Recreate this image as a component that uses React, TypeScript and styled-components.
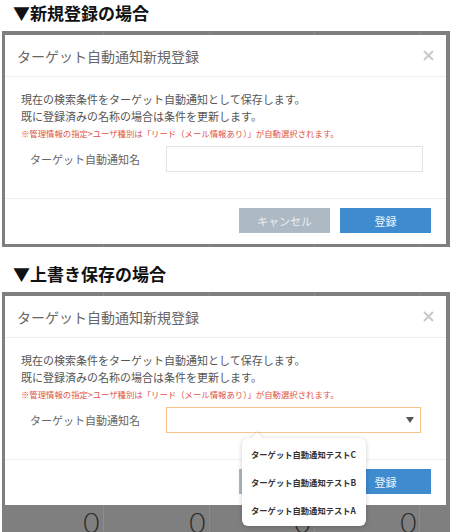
import React from 'react'
import styled, { createGlobalStyle } from 'styled-components'

const GlobalStyle = createGlobalStyle`
    html, body {
        margin: 0;
        padding: 0;
        overflow: hidden;
        background: #fff;
    }
    body {
        font-family: "Noto Sans CJK JP", "Noto Sans", sans-serif;
    }
`

const Page = styled.div`
    width: 450px;
    height: 532px;
    overflow: hidden;
    display: flex;
    flex-direction: column;
    gap: 14px;
`

const Section = styled.section`
    display: flex;
    flex-direction: column;
    gap: 5px;
`

const Heading = styled.h2`
    margin: 0;
    padding-left: 13px;
    font-size: 17px;
    line-height: 26px;
    font-weight: 700;
    color: #111;
`

const Backdrop = styled.div`
    margin-left: 2px;
    width: 448px;
    box-sizing: border-box;
    padding: 4px 4px 3px 3px;
    background-color: #7f7f7f;
    background-image: repeating-linear-gradient(90deg, transparent 0 104.3px, #8c8c8c 104.3px 105.3px);
    background-position: -3px 0;
`

const Modal = styled.div`
    background: #fff;
    display: flex;
    flex-direction: column;
`

const ModalHeader = styled.div`
    height: 41px;
    border-bottom: 1px solid #eee;
    display: flex;
    align-items: center;
    justify-content: space-between;
    padding: 0 12px 0 12px;
`

const ModalTitle = styled.h3`
    margin: 0;
    font-size: 14px;
    font-weight: 400;
    color: #666;
`

const CloseButton = styled.button`
    border: 0;
    background: none;
    padding: 0;
    width: 11px;
    height: 11px;
    display: flex;
    cursor: pointer;
`

const ModalBody = styled.div`
    padding: 14px 23px 26px 16px;
`

const Message = styled.p`
    margin: 0;
    font-size: 11px;
    line-height: 17px;
    color: #555;
`

const Notice = styled.p`
    margin: 0;
    font-size: 8.4px;
    line-height: 17px;
    color: #e0534a;
    white-space: nowrap;
`

const FieldRow = styled.div`
    margin-top: 4px;
    display: flex;
    align-items: center;
    padding-left: 9px;
`

const FieldLabel = styled.label`
    width: 136px;
    font-size: 11px;
    color: #666;
`

const TextInput = styled.input`
    width: 257px;
    height: 26px;
    box-sizing: border-box;
    border: 1px solid #e3e3e3;
    border-radius: 0;
    outline: none;
    padding: 0 8px;
    font-family: inherit;
`

const SelectBox = styled.div`
    position: relative;
    width: 255px;
    height: 26px;
    box-sizing: border-box;
    border: 1px solid #f9c48a;
    display: flex;
    align-items: center;
    justify-content: flex-end;
    padding-right: 6px;
`

const Dropdown = styled.ul`
    position: absolute;
    left: 75px;
    top: calc(100% + 6px);
    width: 124px;
    margin: 0;
    padding: 2px 0;
    list-style: none;
    background: #fff;
    border-radius: 6px;
    box-shadow: 0 1px 5px rgba(0, 0, 0, 0.2);
    z-index: 2;

    &::before {
        content: '';
        position: absolute;
        top: -4px;
        left: 11px;
        width: 8.5px;
        height: 8.5px;
        background: #fff;
        transform: rotate(45deg);
        box-shadow: -1px -1px 2px rgba(0, 0, 0, 0.1);
    }
`

const DropdownItem = styled.li`
    position: relative;
    height: 28px;
    line-height: 28px;
    padding-left: 9px;
    font-size: 8.3px;
    font-weight: 700;
    color: #333;
    white-space: nowrap;
`

const ModalFooter = styled.div`
    border-top: 1px solid #eee;
    padding: 9px 15px 11px;
    display: flex;
    justify-content: flex-end;
    gap: 10px;
`

const Button = styled.button<{ $variant: 'cancel' | 'primary' }>`
    width: 91px;
    height: 25px;
    border: 0;
    border-radius: 0;
    font-family: inherit;
    font-size: 11px;
    cursor: pointer;
    color: ${p => p.$variant === 'primary' ? '#eef5fc' : '#e9eef1'};
    background: ${p => p.$variant === 'primary' ? '#3f8bcf' : '#adbac3'};
`

const BackdropRow = styled.div`
    display: grid;
    grid-template-columns: 99px 106px 105px 106px;
    height: 40px;
`

const BackdropCell = styled.div`
    text-align: right;
    padding: 3px 4.5px 0 0;
    font-family: Lato, "Open Sans", sans-serif;
    font-weight: 300;
    font-size: 28px;
    line-height: 28px;
    color: #2b2b2b;
`

function CloseIcon() {
    return (
        <svg width="11" height="11" viewBox="0 0 11 11">
            <path d="M1 1 L10 10 M10 1 L1 10" stroke="#c9c9c9" strokeWidth="2" />
        </svg>
    )
}

function Caret() {
    return (
        <svg width="8" height="6" viewBox="0 0 8 6">
            <polygon points="0,0 8,0 4,6" fill="#555" />
        </svg>
    )
}

const options = ['ターゲット自動通知テストC', 'ターゲット自動通知テストB', 'ターゲット自動通知テストA']

function RegisterModal({ overwrite }: { overwrite?: boolean }) {
    return (
        <Modal>
            <ModalHeader>
                <ModalTitle>ターゲット自動通知新規登録</ModalTitle>
                <CloseButton aria-label="閉じる"><CloseIcon /></CloseButton>
            </ModalHeader>
            <ModalBody>
                <Message>現在の検索条件をターゲット自動通知として保存します。</Message>
                <Message>既に登録済みの名称の場合は条件を更新します。</Message>
                <Notice>※管理情報の指定&gt;ユーザ種別は「リード（メール情報あり）」が自動選択されます。</Notice>
                <FieldRow>
                    <FieldLabel>ターゲット自動通知名</FieldLabel>
                    {overwrite ? (
                        <SelectBox>
                            <Caret />
                            <Dropdown>
                                {options.map(o => <DropdownItem key={o}>{o}</DropdownItem>)}
                            </Dropdown>
                        </SelectBox>
                    ) : (
                        <TextInput type="text" />
                    )}
                </FieldRow>
            </ModalBody>
            <ModalFooter>
                <Button $variant="cancel">キャンセル</Button>
                <Button $variant="primary">登録</Button>
            </ModalFooter>
        </Modal>
    )
}

export default function App() {
    return (
        <>
            <GlobalStyle />
            <Page>
                <Section>
                    <Heading>▼新規登録の場合</Heading>
                    <Backdrop>
                        <RegisterModal />
                    </Backdrop>
                </Section>
                <Section>
                    <Heading>▼上書き保存の場合</Heading>
                    <Backdrop>
                        <RegisterModal overwrite />
                        <BackdropRow>
                            {[0, 0, 0, 0].map((n, i) => <BackdropCell key={i}>{n}</BackdropCell>)}
                        </BackdropRow>
                    </Backdrop>
                </Section>
            </Page>
        </>
    )
}
